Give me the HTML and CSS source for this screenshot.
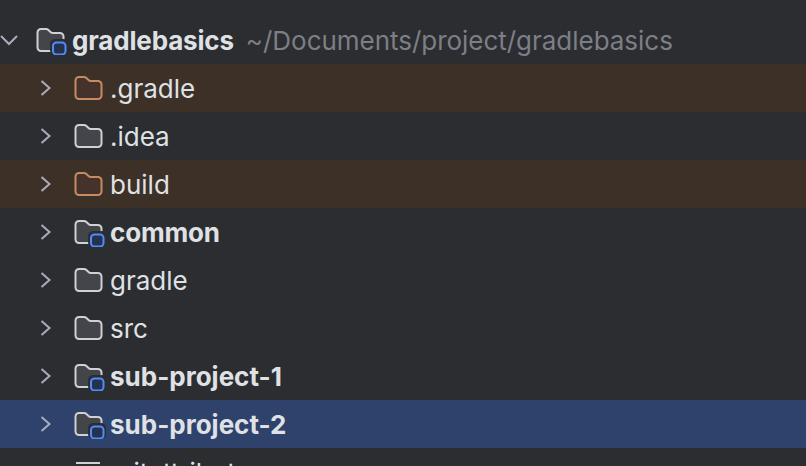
FILE: index.html
```html
<!DOCTYPE html>
<html lang="en">
<head>
    <meta charset="UTF-8">
    <meta name="viewport" content="width=device-width, initial-scale=1.0">
    <title>gradlebasics</title>
    <link rel="stylesheet" href="styles.css">
</head>
<body>
    <svg class="defs" width="0" height="0">
        <symbol id="folder" viewBox="0 0 30 26">
            <path class="folder-shape" d="M1.500 5.500a3.500 3.500 0 0 1 3.500-3.500h5a3.500 3.500 0 0 1 2.400 1l2.400 2.300a2.500 2.500 0 0 0 1.700.700h7.500a3.500 3.500 0 0 1 3.500 3.500v11a3.500 3.500 0 0 1-3.500 3.500H5a3.500 3.500 0 0 1-3.500-3.500z"/>
        </symbol>
        <symbol id="module" viewBox="0 0 32 28">
            <path class="folder-shape" d="M1.500 5.500a3.500 3.500 0 0 1 3.500-3.500h5a3.500 3.500 0 0 1 2.400 1l2.400 2.300a2.500 2.500 0 0 0 1.700.700h7.500a3.500 3.500 0 0 1 3.500 3.500v11a3.500 3.500 0 0 1-3.500 3.500H5a3.500 3.500 0 0 1-3.500-3.500z"/>
            <rect class="badge-cut" x="14" y="12" width="18" height="16" rx="5"/>
            <rect class="badge" x="17" y="15.500" width="12.500" height="12" rx="3.500"/>
        </symbol>
        <symbol id="chev-right" viewBox="0 0 14 18">
            <path d="M2.500 2l8 7-8 7" fill="none" stroke="currentColor" stroke-width="2"/>
        </symbol>
        <symbol id="chev-down" viewBox="0 0 18 14">
            <path d="M1 3l8 8 8-8" fill="none" stroke="currentColor" stroke-width="2"/>
        </symbol>
    </svg>

    <div class="tree">
        <div class="row root">
            <svg class="chev-down"><use href="#chev-down"/></svg>
            <svg class="icon-module"><use href="#module"/></svg>
            <span class="name bold tight">gradlebasics</span>
            <span class="path">~/Documents/project/gradlebasics</span>
        </div>
        <div class="row excluded">
            <svg class="chev"><use href="#chev-right"/></svg>
            <svg class="icon-folder"><use href="#folder"/></svg>
            <span class="name">.gradle</span>
        </div>
        <div class="row">
            <svg class="chev"><use href="#chev-right"/></svg>
            <svg class="icon-folder"><use href="#folder"/></svg>
            <span class="name">.idea</span>
        </div>
        <div class="row excluded">
            <svg class="chev"><use href="#chev-right"/></svg>
            <svg class="icon-folder"><use href="#folder"/></svg>
            <span class="name">build</span>
        </div>
        <div class="row">
            <svg class="chev"><use href="#chev-right"/></svg>
            <svg class="icon-module"><use href="#module"/></svg>
            <span class="name bold tight">common</span>
        </div>
        <div class="row">
            <svg class="chev"><use href="#chev-right"/></svg>
            <svg class="icon-folder"><use href="#folder"/></svg>
            <span class="name">gradle</span>
        </div>
        <div class="row">
            <svg class="chev"><use href="#chev-right"/></svg>
            <svg class="icon-folder"><use href="#folder"/></svg>
            <span class="name">src</span>
        </div>
        <div class="row">
            <svg class="chev"><use href="#chev-right"/></svg>
            <svg class="icon-module"><use href="#module"/></svg>
            <span class="name bold">sub-project-1</span>
        </div>
        <div class="row selected">
            <svg class="chev"><use href="#chev-right"/></svg>
            <svg class="icon-module"><use href="#module"/></svg>
            <span class="name bold">sub-project-2</span>
        </div>
        <div class="row file">
            <svg class="icon-file" viewBox="0 0 28 26">
                <path d="M2 1h24M2 9h24M2 17h16" fill="none" stroke="#ced0d6" stroke-width="2"/>
            </svg>
            <span class="name">.gitattributes</span>
        </div>
    </div>
</body>
</html>
```

FILE: styles.css
```css
html, body {
    margin: 0;
    padding: 0;
    height: 466px;
    overflow: hidden;
    background: #2b2d30;
}
.defs {
    display: block;
    height: 0;
}
.tree {
    padding-top: 16px;
    font-family: Inter, "Noto Sans", sans-serif;
    font-size: 26px;
    color: #dfe1e5;
}
.row {
    display: flex;
    align-items: center;
    height: 48px;
    padding-left: 39px;
    white-space: nowrap;
    --folder: #ced0d6;
    --folder-fill: #43454a;
}
.excluded {
    background: #3d3027;
    --folder: #c68b62;
    --folder-fill: #45322b;
}
.selected {
    background: #2e426c;
}
.chev {
    width: 14px;
    height: 18px;
    margin-right: 21px;
    color: #a8adbd;
}
.chev-down {
    width: 18px;
    height: 14px;
    margin-left: -39px;
    margin-right: 18px;
    color: #a8adbd;
}
.icon-folder {
    width: 30px;
    height: 26px;
    margin-right: 6px;
}
.icon-module {
    width: 32px;
    height: 28px;
    margin-top: 2px;
    margin-right: 4px;
}
.folder-shape {
    fill: var(--folder-fill);
    stroke: var(--folder);
    stroke-width: 2;
}
.badge-cut {
    fill: #2b2d30;
}
.selected .badge-cut {
    fill: #2e426c;
}
.badge {
    fill: #25324d;
    stroke: #548af7;
    stroke-width: 2;
}
.bold {
    font-weight: 700;
}
.tight {
    letter-spacing: -0.17px;
}
.path {
    margin-left: 12px;
    letter-spacing: -0.03px;
    color: #7c7f86;
}
.file {
    padding-left: 74px;
}
.icon-file {
    width: 28px;
    height: 26px;
    margin-top: 6px;
    margin-right: 8px;
}
```
